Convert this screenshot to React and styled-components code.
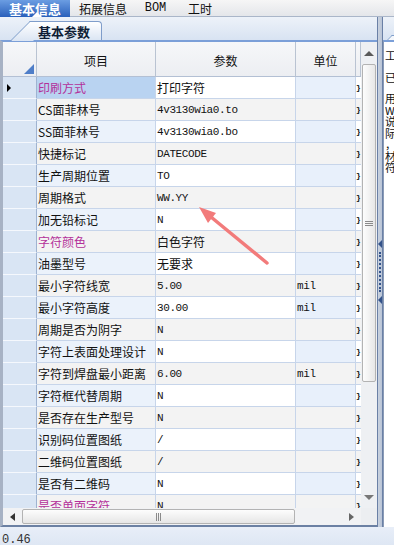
import React from 'react';
import styled, { createGlobalStyle, css } from 'styled-components';

const GlobalStyle = createGlobalStyle`
    html, body {
        margin: 0;
        padding: 0;
    }
    body {
        width: 394px;
        height: 545px;
        overflow: hidden;
        background: #e1e9f5;
        font-family: "Noto Sans CJK SC", sans-serif;
    }
`;

const COLS = '34px 119px 140px 60px 5px';

const Page = styled.div`
    position: relative;
    width: 394px;
    height: 545px;
    display: flex;
    flex-direction: column;
    overflow: hidden;
`;

const TopTabs = styled.div`
    height: 17px;
    box-sizing: border-box;
    display: flex;
    background: linear-gradient(#f6f6f6, #e4e6ea);
    border-bottom: 1px solid #aab6c9;
`;

const Tab = styled.div`
    position: relative;
    width: ${({ $w }) => $w}px;
    height: 17px;
    display: flex;
    align-items: center;
    justify-content: center;
    font-size: 12px;
    line-height: 17px;
    color: #111;
    font-family: ${({ $mono }) => ($mono ? '"Liberation Mono", monospace' : '"Noto Sans CJK SC", sans-serif')};

    ${({ $active }) => $active && css`
        background: linear-gradient(#6b9de2, #2a60bb);
        color: #fff;
        font-weight: bold;
        font-size: 13px;

        &::after {
            content: '';
            position: absolute;
            left: 32px;
            bottom: 0;
            border-style: solid;
            border-width: 0 5px 5px 5px;
            border-color: transparent transparent #fff transparent;
        }
    `}
`;

const Workspace = styled.div`
    height: 510px;
    display: flex;
`;

const MainPane = styled.div`
    width: 377px;
    display: flex;
    flex-direction: column;
`;

const SubTabBar = styled.div`
    height: 23px;
    box-sizing: border-box;
    display: flex;
    align-items: flex-end;
    padding-left: 30px;
    background: linear-gradient(#edf2f9, #d8e3f2);
`;

const SubTab = styled.div`
    position: relative;
    width: 72px;
    height: 19px;
    box-sizing: border-box;
    padding-left: 8px;
    display: flex;
    align-items: center;
    border-top: 1px solid #7f9dca;
    border-right: 1px solid #7f9dca;
    border-top-right-radius: 4px;
    background: linear-gradient(#ffffff, #dbe5f3);
    font-size: 13px;
    font-weight: bold;
    color: #0f1e36;

    &::before {
        content: '';
        position: absolute;
        left: -20px;
        top: -1px;
        width: 22px;
        height: 19px;
        border-left: 1px solid #7f9dca;
        border-top: 1px solid #7f9dca;
        background: linear-gradient(#ffffff, #dbe5f3);
        transform: skewX(-45deg);
        transform-origin: bottom left;
    }

    span {
        position: relative;
        z-index: 1;
    }
`;

const GridFrame = styled.div`
    flex: 1;
    min-height: 0;
    display: flex;
    flex-direction: column;
    border-top: 2px solid #7b9fd8;
    border-left: 3px solid #a7b2c4;
    border-bottom: 2px solid #6b80a3;
`;

const GridBody = styled.div`
    height: 466px;
    display: flex;
`;

const Table = styled.div`
    width: 358px;
    overflow: hidden;
    background: #fff;
`;

const HeaderRow = styled.div`
    display: grid;
    grid-template-columns: ${COLS};
    height: 35px;
`;

const HeadCell = styled.div`
    position: relative;
    box-sizing: border-box;
    border-right: 1px solid #b9c3d2;
    border-bottom: 1px solid #b3c0d4;
    background: linear-gradient(#f6f7f9, #eceef2);
    display: flex;
    align-items: center;
    justify-content: center;
    padding-top: 2px;
    font-size: 12px;
    color: #111;

    ${({ $corner }) => $corner && css`
        &::after {
            content: '';
            position: absolute;
            right: 2px;
            bottom: 2px;
            border-style: solid;
            border-width: 0 0 10px 10px;
            border-color: transparent transparent #4f7ec8 transparent;
        }
    `}
`;

const Row = styled.div`
    display: grid;
    grid-template-columns: ${COLS};
    height: 22px;
`;

const RowHead = styled.div`
    position: relative;
    box-sizing: border-box;
    background: #d9e5f4;
    border-right: 1px solid #9fb3d1;
    border-bottom: 1px solid #f5f8fd;

    ${({ $current }) => $current && css`
        &::after {
            content: '';
            position: absolute;
            left: 4px;
            top: 7px;
            border-style: solid;
            border-width: 4px 0 4px 4px;
            border-color: transparent transparent transparent #000;
        }
    `}
`;

const Cell = styled.div`
    box-sizing: border-box;
    border-right: 1px solid #c7d5ea;
    border-bottom: 1px solid #c7d5ea;
    background: ${({ $bg }) => $bg};
    padding-left: 1px;
    display: flex;
    align-items: center;
    white-space: nowrap;
    overflow: hidden;
    color: ${({ $accent }) => ($accent ? '#b3309a' : '#111')};
    ${({ $mono }) => ($mono
        ? css`
            font-family: "Liberation Mono", monospace;
            font-size: 11px;
            letter-spacing: -0.4px;
        `
        : css`
            font-family: "Noto Sans CJK SC", sans-serif;
            font-size: 12px;
        `)}
`;

const EdgeCell = styled.div`
    box-sizing: border-box;
    background: ${({ $bg }) => $bg};
    border-bottom: 1px solid #c7d5ea;
    display: flex;
    align-items: center;
    font-family: "Liberation Mono", monospace;
    font-size: 8px;
    font-weight: bold;
    color: #111;
`;

const VScroll = styled.div`
    width: 16px;
    display: flex;
    flex-direction: column;
    align-items: center;
    background: #eef0f3;
`;

const HScrollRow = styled.div`
    height: 17px;
    display: flex;
`;

const HScroll = styled.div`
    width: 358px;
    display: flex;
    align-items: center;
    background: #f1f2f4;
`;

const ScrollCorner = styled.div`
    width: 16px;
    background: #eceef1;
`;

const ArrowBox = styled.div`
    display: flex;
    align-items: center;
    justify-content: center;
    ${({ $dir }) => ($dir === 'up' || $dir === 'down'
        ? css`width: 16px; height: 22px;`
        : css`width: 19px; height: 17px;`)}

    &::before {
        content: '';
        border-style: solid;
        ${({ $dir }) => ({
            up: css`border-width: 0 5px 5px 5px; border-color: transparent transparent #5a5a5a transparent;`,
            down: css`border-width: 5px 5px 0 5px; border-color: #777 transparent transparent transparent;`,
            left: css`border-width: 4px 5px 4px 0; border-color: transparent #333 transparent transparent;`,
            right: css`border-width: 4px 0 4px 5px; border-color: transparent transparent transparent #666;`,
        }[$dir])}
    }
`;

const Thumb = styled.div`
    box-sizing: border-box;
    display: flex;
    align-items: center;
    justify-content: center;
    border: 1px solid #b3b3b3;
    border-radius: 2px;
    ${({ $vertical }) => ($vertical
        ? css`
            width: 14px;
            height: 318px;
            background: linear-gradient(90deg, #fdfdfd, #e7e7e7);
        `
        : css`
            width: 273px;
            height: 15px;
            background: linear-gradient(#fdfdfd, #e6e6e6);
        `)}
`;

const Grip = styled.div`
    ${({ $vertical }) => ($vertical
        ? css`
            width: 8px;
            height: 5px;
            background: repeating-linear-gradient(#8a8a8a 0 1px, transparent 1px 2px);
        `
        : css`
            width: 5px;
            height: 8px;
            background: repeating-linear-gradient(90deg, #8a8a8a 0 1px, transparent 1px 2px);
        `)}
`;

const Spacer = styled.div`
    flex: 1;
`;

const Splitter = styled.div`
    width: 6px;
    box-sizing: border-box;
    display: flex;
    flex-direction: column;
    align-items: center;
    justify-content: center;
    gap: 4px;
    background: linear-gradient(90deg, #c9d2df, #b9c4d6);
    border-left: 1px solid #6a80a6;
    border-right: 1px solid #6a80a6;
`;

const SplitArrow = styled.div`
    border-style: solid;
    border-width: 4px 4px 4px 0;
    border-color: transparent #34538a transparent transparent;
`;

const SplitDots = styled.div`
    width: 0;
    height: 40px;
    border-left: 2px dotted #34538a;
`;

const SidePane = styled.div`
    flex: 1;
    display: flex;
    flex-direction: column;
    overflow: hidden;
`;

const SideHead = styled.div`
    position: relative;
    height: 23px;
    background: linear-gradient(#edf2f9, #d8e3f2);
    overflow: hidden;

    &::before {
        content: '';
        position: absolute;
        left: 2px;
        top: 18px;
        width: 30px;
        height: 6px;
        border-left: 1px solid #7f9dca;
        border-top: 1px solid #7f9dca;
        background: #f4f7fb;
        transform: skewX(-45deg);
        transform-origin: bottom left;
    }
`;

const SideBody = styled.div`
    flex: 1;
    background: #fff;
    border-top: 2px solid #7b9fd8;
    border-left: 1px solid #8a9bb6;
    padding: 8px 0 0 1px;
    font-size: 11px;
    white-space: nowrap;
    color: #111;
`;

const SideLine = styled.div`
    height: 11.5px;
    line-height: 11.5px;
    overflow: hidden;
    margin-top: ${({ $gap }) => $gap || 0}px;
`;

const StatusBar = styled.div`
    flex: 1;
    padding: 6px 0 0 2px;
    background: linear-gradient(#e8eef8, #dde6f3);
    font-family: "Liberation Mono", monospace;
    font-size: 12px;
    line-height: 14px;
    color: #333;
`;

const Annotation = styled.svg`
    position: absolute;
    left: 0;
    top: 0;
    pointer-events: none;
`;

const rows = [
    { name: '印刷方式', value: '打印字符', accent: true },
    { name: 'CS面菲林号', value: '4v3130wia0.to', mono: true },
    { name: 'SS面菲林号', value: '4v3130wia0.bo', mono: true },
    { name: '快捷标记', value: 'DATECODE', mono: true },
    { name: '生产周期位置', value: 'TO', mono: true },
    { name: '周期格式', value: 'WW.YY', mono: true },
    { name: '加无铅标记', value: 'N', mono: true },
    { name: '字符颜色', value: '白色字符', accent: true },
    { name: '油墨型号', value: '无要求' },
    { name: '最小字符线宽', value: '5.00', mono: true, unit: 'mil' },
    { name: '最小字符高度', value: '30.00', mono: true, unit: 'mil' },
    { name: '周期是否为阴字', value: 'N', mono: true },
    { name: '字符上表面处理设计', value: 'N', mono: true },
    { name: '字符到焊盘最小距离', value: '6.00', mono: true, unit: 'mil' },
    { name: '字符框代替周期', value: 'N', mono: true },
    { name: '是否存在生产型号', value: 'N', mono: true },
    { name: '识别码位置图纸', value: '/', mono: true },
    { name: '二维码位置图纸', value: '/', mono: true },
    { name: '是否有二维码', value: 'N', mono: true },
    { name: '是否单面字符', value: 'N', mono: true, accent: true },
];

const sideLines = [
    { text: '工', gap: 0 },
    { text: '已', gap: 10 },
    { text: '用', gap: 10 },
    { text: 'W' },
    { text: '说' },
    { text: '际' },
    { text: '，' },
    { text: '材' },
    { text: '符' },
];

const App = () => {
    return (
        <Page>
            <GlobalStyle />
            <TopTabs>
                <Tab $w={70} $active>基本信息</Tab>
                <Tab $w={66}>拓展信息</Tab>
                <Tab $w={39} $mono>BOM</Tab>
                <Tab $w={50}>工时</Tab>
            </TopTabs>

            <Workspace>
                <MainPane>
                    <SubTabBar>
                        <SubTab><span>基本参数</span></SubTab>
                    </SubTabBar>
                    <GridFrame>
                        <GridBody>
                            <Table>
                                <HeaderRow>
                                    <HeadCell $corner />
                                    <HeadCell>项目</HeadCell>
                                    <HeadCell>参数</HeadCell>
                                    <HeadCell>单位</HeadCell>
                                    <HeadCell />
                                </HeaderRow>
                                {rows.map((row, i) => {
                                    const odd = i % 2 === 1;
                                    const itemBg = i === 0 ? '#b9d3f1' : odd ? '#f3f3f3' : '#ebf2fb';
                                    const valueBg = odd ? '#f3f3f3' : '#ffffff';
                                    const unitBg = odd ? '#f3f3f3' : '#e8f0fb';
                                    return (
                                        <Row key={row.name}>
                                            <RowHead $current={i === 0} />
                                            <Cell $bg={itemBg} $accent={row.accent}>{row.name}</Cell>
                                            <Cell $bg={valueBg} $mono={row.mono}>{row.value}</Cell>
                                            <Cell $bg={unitBg} $mono>{row.unit}</Cell>
                                            <EdgeCell $bg={valueBg}>{'}'}</EdgeCell>
                                        </Row>
                                    );
                                })}
                            </Table>
                            <VScroll>
                                <ArrowBox $dir="up" />
                                <Thumb $vertical><Grip $vertical /></Thumb>
                                <Spacer />
                                <ArrowBox $dir="down" />
                            </VScroll>
                        </GridBody>
                        <HScrollRow>
                            <HScroll>
                                <ArrowBox $dir="left" />
                                <Thumb><Grip /></Thumb>
                                <Spacer />
                                <ArrowBox $dir="right" />
                            </HScroll>
                            <ScrollCorner />
                        </HScrollRow>
                    </GridFrame>
                </MainPane>

                <Splitter>
                    <SplitArrow />
                    <SplitDots />
                    <SplitArrow />
                </Splitter>

                <SidePane>
                    <SideHead />
                    <SideBody>
                        {sideLines.map((line, i) => (
                            <SideLine key={i} $gap={line.gap}>{line.text}</SideLine>
                        ))}
                    </SideBody>
                </SidePane>
            </Workspace>

            <StatusBar>0.46</StatusBar>

            <Annotation width="394" height="545" viewBox="0 0 394 545">
                <line x1="211" y1="217" x2="267" y2="263" stroke="#f27b7b" strokeWidth="3.5" strokeLinecap="round" />
                <polygon points="199,207 216,213 208,223" fill="#f27b7b" />
            </Annotation>
        </Page>
    );
};

export default App;
